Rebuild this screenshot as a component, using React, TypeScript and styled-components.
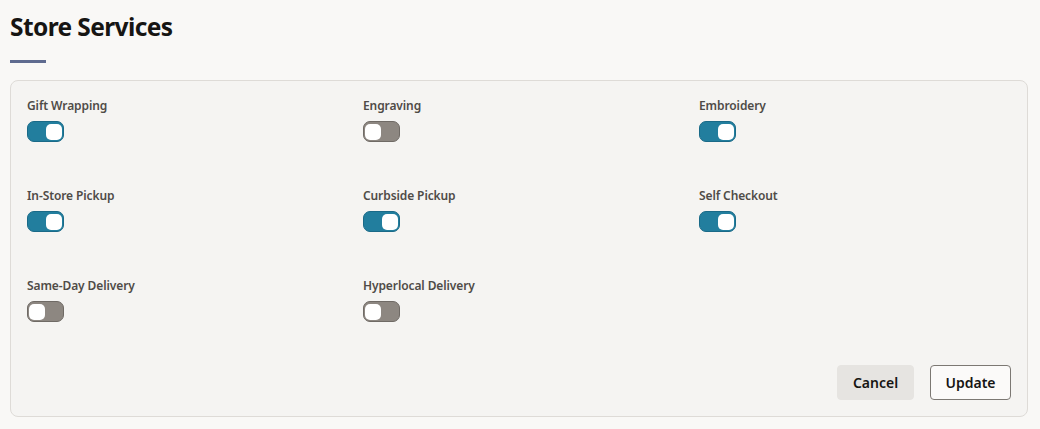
import React, { useState } from "react";
import styled, { createGlobalStyle } from "styled-components";

const GlobalStyle = createGlobalStyle`
  body {
    margin: 0;
    background: #f9f8f6;
    font-family: "Noto Sans", "Open Sans", sans-serif;
  }
`;

const Page = styled.div`
  padding: 10px 12px 12px 10px;
  box-sizing: border-box;
  width: 1040px;
`;

const Title = styled.h1`
  margin: 0;
  font-size: 24.5px;
  font-weight: 700;
  color: #161513;
  line-height: 34px;
  letter-spacing: -0.6px;
`;

const TitleRule = styled.div`
  width: 36px;
  height: 3px;
  background: #5f6b8f;
  margin: 16px 0 17px;
`;

const Card = styled.div`
  background: #f5f4f2;
  border: 1px solid #dedbd7;
  border-radius: 8px;
  padding: 16px;
  box-sizing: border-box;
  width: 1018px;
`;

const Grid = styled.div`
  display: grid;
  grid-template-columns: repeat(3, 336px);
  row-gap: 45px;
`;

const Field = styled.div`
  display: flex;
  flex-direction: column;
  gap: 6px;
`;

const Label = styled.span`
  font-size: 12px;
  font-weight: 600;
  color: #4f4b47;
  line-height: 18px;
  letter-spacing: -0.1px;
`;

const Track = styled.button<{ $on: boolean }>`
  width: 37px;
  height: 21px;
  padding: 0;
  border-radius: 7px;
  border: 1.5px solid ${(p) => (p.$on ? "#1a6a88" : "#6f6a65")};
  background: ${(p) => (p.$on ? "#227e9e" : "#8d8781")};
  display: flex;
  align-items: center;
  justify-content: ${(p) => (p.$on ? "flex-end" : "flex-start")};
  box-sizing: border-box;
  cursor: pointer;
`;

const Knob = styled.span`
  width: 16px;
  height: 16px;
  border-radius: 5px;
  background: #ffffff;
  margin: 0 1px;
`;

const Actions = styled.div`
  display: flex;
  justify-content: flex-end;
  gap: 16px;
  margin-top: 43px;
`;

const Button = styled.button<{ $variant: "solid" | "outline" }>`
  height: 35px;
  padding: 0;
  border-radius: 4px;
  font-family: inherit;
  font-size: 14px;
  font-weight: 600;
  color: #161513;
  cursor: pointer;
  background: ${(p) => (p.$variant === "solid" ? "#e6e4e1" : "#fbfaf9")};
  border: 1px solid ${(p) => (p.$variant === "solid" ? "#e6e4e1" : "#7c7873")};
  width: ${(p) => (p.$variant === "solid" ? "77px" : "81px")};
`;

const services = [
  { name: "Gift Wrapping", on: true },
  { name: "Engraving", on: false },
  { name: "Embroidery", on: true },
  { name: "In-Store Pickup", on: true },
  { name: "Curbside Pickup", on: true },
  { name: "Self Checkout", on: true },
  { name: "Same-Day Delivery", on: false },
  { name: "Hyperlocal Delivery", on: false },
];

const App = () => {
  const [state, setState] = useState(services.map((s) => s.on));

  const toggle = (i: number) =>
    setState((prev) => prev.map((v, j) => (j === i ? !v : v)));

  return (
    <Page>
      <GlobalStyle />
      <Title>Store Services</Title>
      <TitleRule />
      <Card>
        <Grid>
          {services.map((s, i) => (
            <Field key={s.name}>
              <Label>{s.name}</Label>
              <Track $on={state[i]} onClick={() => toggle(i)} aria-pressed={state[i]}>
                <Knob />
              </Track>
            </Field>
          ))}
        </Grid>
        <Actions>
          <Button $variant="solid">Cancel</Button>
          <Button $variant="outline">Update</Button>
        </Actions>
      </Card>
    </Page>
  );
};

export default App;
